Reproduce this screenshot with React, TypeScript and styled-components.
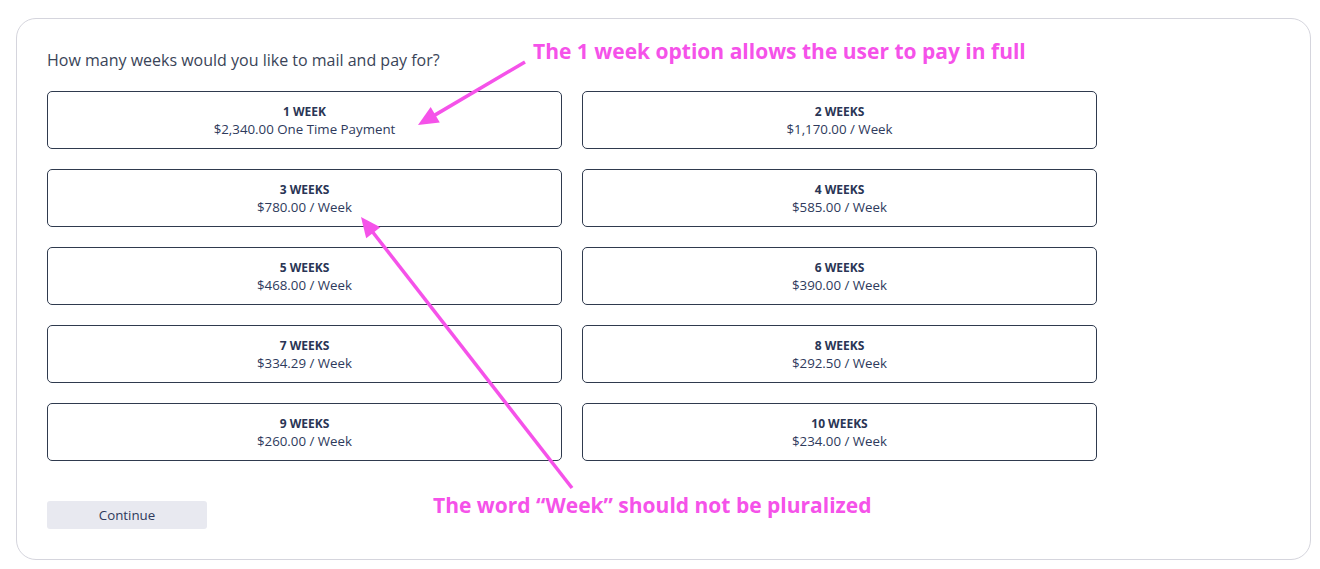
import React from "react";
import styled, { createGlobalStyle } from "styled-components";

const GlobalStyle = createGlobalStyle`
  html, body { margin: 0; padding: 0; background: #ffffff; }
  body { font-family: "Open Sans", "Noto Sans", sans-serif; }
  * { box-sizing: border-box; }
`;

const Page = styled.div`
  position: relative;
  width: 1320px;
  height: 569px;
  padding: 18px 10px 10px 16px;
`;

const Card = styled.div`
  width: 1295px;
  height: 542px;
  border: 1px solid #d5d5dd;
  border-radius: 20px;
  padding: 30px 30px 30px 30px;
  display: flex;
  flex-direction: column;
`;

const Question = styled.h2`
  margin: 0 0 20px 0;
  font-size: 16px;
  line-height: 22px;
  font-weight: 400;
  color: #3a4458;
`;

const OptionGrid = styled.div`
  display: grid;
  grid-template-columns: 515px 515px;
  grid-auto-rows: 58px;
  column-gap: 20px;
  row-gap: 20px;
`;

const Option = styled.button`
  display: flex;
  flex-direction: column;
  align-items: center;
  justify-content: center;
  border: 1px solid #2f3a4e;
  border-radius: 5px;
  background: #ffffff;
  padding: 1px 0 0 0;
  font-family: "Open Sans", "Noto Sans", sans-serif;
  color: #2e3a5c;
  cursor: pointer;
`;

const OptionTitle = styled.span`
  font-size: 12px;
  line-height: 18px;
  font-weight: 700;
  text-transform: uppercase;
  color: #2a3555;
`;

const OptionPrice = styled.span`
  margin-top: -1px;
  font-size: 13.3px;
  line-height: 18px;
  font-weight: 400;
  color: #2e3a5c;
`;

const ContinueButton = styled.button`
  margin-top: 40px;
  width: 160px;
  height: 28px;
  border: none;
  border-radius: 3px;
  background: #e8e9f0;
  font-family: "Open Sans", "Noto Sans", sans-serif;
  font-size: 13.3px;
  color: #2e3a5c;
  cursor: pointer;
`;

const Overlay = styled.svg`
  position: absolute;
  left: 0;
  top: 0;
  pointer-events: none;
`;

const Note = styled.div<{ $x: number; $y: number }>`
  position: absolute;
  left: ${(p) => p.$x}px;
  top: ${(p) => p.$y}px;
  font-family: "Open Sans", "Noto Sans", sans-serif;
  font-size: 21px;
  line-height: 28px;
  font-weight: 700;
  color: #f552e9;
  white-space: nowrap;
`;

const options = [
  { title: "1 Week", price: "$2,340.00 One Time Payment" },
  { title: "2 Weeks", price: "$1,170.00 / Week" },
  { title: "3 Weeks", price: "$780.00 / Week" },
  { title: "4 Weeks", price: "$585.00 / Week" },
  { title: "5 Weeks", price: "$468.00 / Week" },
  { title: "6 Weeks", price: "$390.00 / Week" },
  { title: "7 Weeks", price: "$334.29 / Week" },
  { title: "8 Weeks", price: "$292.50 / Week" },
  { title: "9 Weeks", price: "$260.00 / Week" },
  { title: "10 Weeks", price: "$234.00 / Week" },
];

const PINK = "#f552e9";

function Arrow({ x1, y1, x2, y2 }: { x1: number; y1: number; x2: number; y2: number }) {
  const dx = x2 - x1;
  const dy = y2 - y1;
  const len = Math.sqrt(dx * dx + dy * dy);
  const ux = dx / len;
  const uy = dy / len;
  const head = 20;
  const half = 9;
  const bx = x2 - ux * head;
  const by = y2 - uy * head;
  const nx = -uy;
  const ny = ux;
  const pts = `${x2},${y2} ${bx + nx * half},${by + ny * half} ${bx - nx * half},${by - ny * half}`;
  return (
    <g>
      <line x1={x1} y1={y1} x2={bx + ux * 2} y2={by + uy * 2} stroke={PINK} strokeWidth={3.5} />
      <polygon points={pts} fill={PINK} />
    </g>
  );
}

export default function App() {
  return (
    <>
      <GlobalStyle />
      <Page>
        <Card>
          <Question>How many weeks would you like to mail and pay for?</Question>
          <OptionGrid>
            {options.map((o) => (
              <Option key={o.title}>
                <OptionTitle>{o.title}</OptionTitle>
                <OptionPrice>{o.price}</OptionPrice>
              </Option>
            ))}
          </OptionGrid>
          <div>
            <ContinueButton>Continue</ContinueButton>
          </div>
        </Card>
        <Overlay width={1320} height={569}>
          <Arrow x1={525} y1={62} x2={418} y2={125} />
          <Arrow x1={572} y1={488} x2={361} y2={217} />
        </Overlay>
        <Note $x={533} $y={37}>The 1 week option allows the user to pay in full</Note>
        <Note $x={433} $y={491}>The word “Week” should not be pluralized</Note>
      </Page>
    </>
  );
}
